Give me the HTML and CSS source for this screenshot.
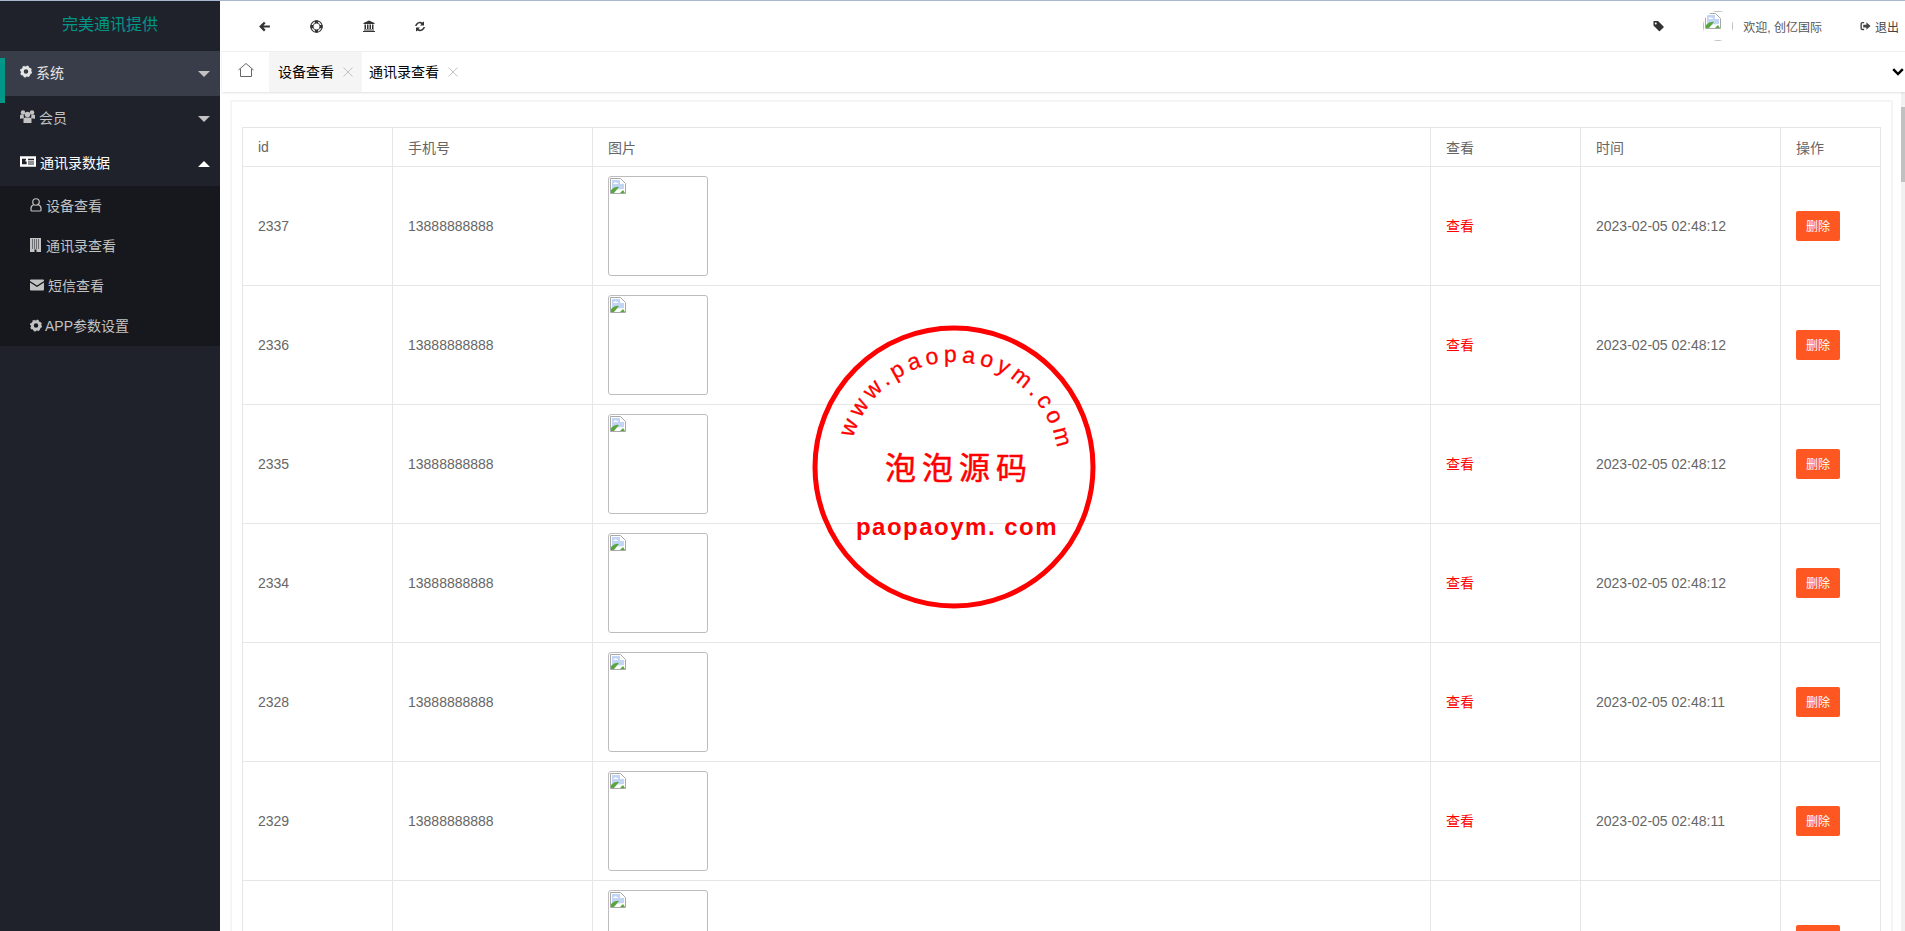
FILE: index.html
```html
<!DOCTYPE html>
<html lang="zh-CN">
<head>
  <meta charset="UTF-8" />
  <title>设备查看</title>
  <link rel="stylesheet" href="styles.css">
</head>
<body>

<!-- icons -->
<svg class="sprite" xmlns="http://www.w3.org/2000/svg">
  <symbol id="i-gear" viewBox="0 0 24 24">
    <circle cx="12" cy="12" r="7.5" fill="none" stroke="currentColor" stroke-width="6"/>
    <circle cx="12" cy="12" r="10.5" fill="none" stroke="currentColor" stroke-width="3" stroke-dasharray="4.2 4.05"/>
  </symbol>
  <symbol id="i-users" viewBox="0 0 30 26">
    <circle cx="6" cy="5" r="4.500" fill="currentColor"/>
    <circle cx="24" cy="5" r="4.500" fill="currentColor"/>
    <path d="M0 18v-7q0-2 3-2h4l1 8H2q-2 0-2 1zM30 18v-7q0-2-3-2h-4l-1 8h6q2 0 2 1z" fill="currentColor"/>
    <circle cx="15" cy="9" r="5.500" fill="currentColor"/>
    <path d="M7 26v-7q0-4 4-4h8q4 0 4 4v7z" fill="currentColor"/>
  </symbol>
  <symbol id="i-card" viewBox="0 0 24 16">
    <path fill-rule="evenodd" d="M0 0h24v16H0zM3 4v8h7V8H8V6h1V4zM12 4v2h9V4zM12 8v1.500h9V8zM12 11v1.500h9V11z" fill="currentColor"/>
  </symbol>
  <symbol id="i-user" viewBox="0 0 24 28">
    <circle cx="12" cy="8" r="6.500" fill="none" stroke="currentColor" stroke-width="2.400"/>
    <path d="M7 14q-5 1-5 7v3q0 2 2 2h16q2 0 2-2v-3q0-6-5-7" fill="none" stroke="currentColor" stroke-width="2.400"/>
  </symbol>
  <symbol id="i-building" viewBox="0 0 22 28">
    <path fill-rule="evenodd" d="M0 0h22v28H0zM4 3v2h2V3zM8 3v2h2V3zM12 3v2h2V3zM16 3v2h2V3zM4 7v2h2V7zM8 7v2h2V7zM12 7v2h2V7zM16 7v2h2V7zM4 11v2h2v-2zM8 11v2h2v-2zM12 11v2h2v-2zM16 11v2h2v-2zM4 15v2h2v-2zM8 15v2h2v-2zM12 15v2h2v-2zM16 15v2h2v-2zM4 19v2h2v-2zM8 19v2h2v-2zM12 19v2h2v-2zM16 19v2h2v-2zM9 23v5h4v-5z" fill="currentColor"/>
  </symbol>
  <symbol id="i-mail" viewBox="0 0 28 22">
    <path d="M0 2q0-2 2-2h24q2 0 2 2v1L14 12 0 3zM0 6l14 9 14-9v14q0 2-2 2H2q-2 0-2-2z" fill="currentColor"/>
  </symbol>
  <symbol id="i-back" viewBox="0 0 24 24">
    <path d="M2 12l9-9 3 3-4 4h12v4H10l4 4-3 3z" fill="currentColor"/>
  </symbol>
  <symbol id="i-ring" viewBox="0 0 24 24">
    <circle cx="12" cy="12" r="10.500" fill="none" stroke="currentColor" stroke-width="2"/>
    <circle cx="12" cy="12" r="6.500" fill="none" stroke="currentColor" stroke-width="1.500"/>
    <path d="M9 1h6v5h-6zM9 18h6v5H9zM1 9h5v6H1zM18 9h5v6h-5z" fill="currentColor"/>
  </symbol>
  <symbol id="i-bank" viewBox="0 0 24 24">
    <path d="M12 1l11 5v2H1V6zM3 9h3v9H3zM8 9h3v9H8zM13 9h3v9h-3zM18 9h3v9h-3zM2 19h20v2H2zM0 22h24v2H0z" fill="currentColor"/>
  </symbol>
  <symbol id="i-refresh" viewBox="0 0 24 24">
    <path d="M20 2v8h-8l3-3q-5-3-8 1-1 1-2 3H2q1-5 5-7 5-3 10 0zM4 22v-8h8l-3 3q5 3 8-1 1-1 2-3h3q-1 5-5 7-5 3-10 0z" fill="currentColor"/>
  </symbol>
  <symbol id="i-tag" viewBox="0 0 24 24">
    <path fill-rule="evenodd" d="M1 2q0-1 1-1h9l12 12q1 1 0 2l-8 8q-1 1-2 0L1 11zM6 4.500a2 2 0 1 0 .01 0z" fill="currentColor"/>
  </symbol>
  <symbol id="i-out" viewBox="0 0 24 24">
    <path d="M9 3H5Q1 3 1 7v10q0 4 4 4h4v-3H5q-1 0-1-1V7q0-1 1-1h4z" fill="currentColor"/>
    <path d="M14 4l9 8-9 8v-5H7V9h7z" fill="currentColor"/>
  </symbol>
  <symbol id="i-x" viewBox="0 0 10 10">
    <path d="M.5.500l9 9M9.500.500l-9 9" fill="none" stroke="currentColor"/>
  </symbol>
  <symbol id="i-broken" viewBox="0 0 16 16">
    <path d="M.5.500h10l5 5v10H.5z" fill="#fff" stroke="#a8a8a8"/>
    <path d="M2 2h8v4h4v5L2 12z" fill="#c3d5f5"/>
    <path d="M3 6q2-3 4-1h1v1H3z" fill="#fff"/>
    <path d="M1 15v-3q4-4 8-3l-5 6z" fill="#5aa63e"/>
    <path d="M10 15l3-3 2 3z" fill="#5aa63e"/>
  </symbol>
</svg>

<div class="app">

  <!-- Sidebar -->
  <aside class="sidebar">
    <div class="brand">完美通讯提供</div>
    <div class="nav-item active">
      <span class="nav-bar"></span>
      <svg class="ic ic-12"><use href="#i-gear"/></svg>
      <span class="nav-text">系统</span>
      <span class="caret"></span>
    </div>
    <div class="nav-item">
      <svg class="ic ic-15"><use href="#i-users"/></svg>
      <span class="nav-text">会员</span>
      <span class="caret"></span>
    </div>
    <div class="nav-item open">
      <svg class="ic ic-16"><use href="#i-card"/></svg>
      <span class="nav-text">通讯录数据</span>
      <span class="caret up"></span>
    </div>
    <div class="subnav">
      <a class="sub-item"><svg class="ic ic-user"><use href="#i-user"/></svg><span class="sub-text">设备查看</span></a>
      <a class="sub-item"><svg class="ic ic-11"><use href="#i-building"/></svg><span class="sub-text wide">通讯录查看</span></a>
      <a class="sub-item"><svg class="ic ic-14"><use href="#i-mail"/></svg><span class="sub-text">短信查看</span></a>
      <a class="sub-item"><svg class="ic ic-12"><use href="#i-gear"/></svg><span class="sub-text tight">APP参数设置</span></a>
    </div>
  </aside>

  <div class="main">

    <!-- Header -->
    <header class="topbar">
      <div class="tools">
        <span class="tool"><svg class="ic ic-13"><use href="#i-back"/></svg></span>
        <span class="tool"><svg class="ic ic-13"><use href="#i-ring"/></svg></span>
        <span class="tool"><svg class="ic ic-14"><use href="#i-bank"/></svg></span>
        <span class="tool"><svg class="ic ic-12"><use href="#i-refresh"/></svg></span>
      </div>
      <div class="user-box">
        <svg class="ic ic-11 tag"><use href="#i-tag"/></svg>
        <div class="avatar"><div class="avatar-img"><svg class="broken"><use href="#i-broken"/></svg></div></div>
        <span class="welcome">欢迎, 创亿国际</span>
        <a class="logout"><svg class="ic ic-11"><use href="#i-out"/></svg>退出</a>
      </div>
    </header>

    <!-- Tabs -->
    <nav class="tabs">
      <span class="tab-home">
        <svg class="home" viewBox="0 0 16 14"><path d="M.5 7L8 .5 15.500 7M2.500 6v7.500h11V6" fill="none" stroke="currentColor"/></svg>
      </span>
      <span class="tab current">设备查看<svg class="tab-x"><use href="#i-x"/></svg></span>
      <span class="tab second">通讯录查看<svg class="tab-x"><use href="#i-x"/></svg></span>
      <svg class="tabs-more" viewBox="0 0 12 8"><path d="M1.200 1.200L6 6l4.800-4.800" fill="none" stroke="currentColor" stroke-width="2.400"/></svg>
    </nav>

    <!-- Content -->
    <div class="content">
      <div class="page">
        <div class="card">
          <table class="data-table">
            <colgroup>
              <col class="c-id"><col class="c-phone"><col class="c-pic"><col class="c-view"><col class="c-time"><col class="c-op">
            </colgroup>
            <thead>
              <tr><th>id</th><th>手机号</th><th>图片</th><th>查看</th><th>时间</th><th>操作</th></tr>
            </thead>
            <tbody>
              <tr>
                <td>2337</td><td>13888888888</td>
                <td><div class="thumb"><svg class="broken"><use href="#i-broken"/></svg></div></td>
                <td><a class="view-link">查看</a></td><td>2023-02-05 02:48:12</td>
                <td><button class="btn-del">删除</button></td>
              </tr>
              <tr>
                <td>2336</td><td>13888888888</td>
                <td><div class="thumb"><svg class="broken"><use href="#i-broken"/></svg></div></td>
                <td><a class="view-link">查看</a></td><td>2023-02-05 02:48:12</td>
                <td><button class="btn-del">删除</button></td>
              </tr>
              <tr>
                <td>2335</td><td>13888888888</td>
                <td><div class="thumb"><svg class="broken"><use href="#i-broken"/></svg></div></td>
                <td><a class="view-link">查看</a></td><td>2023-02-05 02:48:12</td>
                <td><button class="btn-del">删除</button></td>
              </tr>
              <tr>
                <td>2334</td><td>13888888888</td>
                <td><div class="thumb"><svg class="broken"><use href="#i-broken"/></svg></div></td>
                <td><a class="view-link">查看</a></td><td>2023-02-05 02:48:12</td>
                <td><button class="btn-del">删除</button></td>
              </tr>
              <tr>
                <td>2328</td><td>13888888888</td>
                <td><div class="thumb"><svg class="broken"><use href="#i-broken"/></svg></div></td>
                <td><a class="view-link">查看</a></td><td>2023-02-05 02:48:11</td>
                <td><button class="btn-del">删除</button></td>
              </tr>
              <tr>
                <td>2329</td><td>13888888888</td>
                <td><div class="thumb"><svg class="broken"><use href="#i-broken"/></svg></div></td>
                <td><a class="view-link">查看</a></td><td>2023-02-05 02:48:11</td>
                <td><button class="btn-del">删除</button></td>
              </tr>
              <tr>
                <td></td><td></td>
                <td><div class="thumb"><svg class="broken"><use href="#i-broken"/></svg></div></td>
                <td></td><td></td>
                <td><button class="btn-del"></button></td>
              </tr>
            </tbody>
          </table>
        </div>
      </div>
      <div class="scrollbar"><div class="scroll-thumb"></div></div>
    </div>

  </div>
</div>

<!-- Watermark stamp -->
<svg class="stamp" viewBox="0 0 290 290">
  <defs>
    <path id="stamp-arc" d="M145 250A105 105 0 1 1 145.010 250"/>
  </defs>
  <circle cx="145" cy="145" r="139" fill="none" stroke="#f00" stroke-width="5"/>
  <g transform="rotate(4 145 145)">
    <text class="stamp-arc-text"><textPath href="#stamp-arc" startOffset="50%" text-anchor="middle">www.paopaoym.com</textPath></text>
  </g>
  <text class="stamp-cn" x="150" y="157" text-anchor="middle">泡泡源码</text>
  <text class="stamp-en" x="148" y="213" text-anchor="middle">paopaoym. com</text>
</svg>

</body>
</html>
```

FILE: styles.css
```css
* {
  box-sizing: border-box;
}

html, body {
  height: 100%;
}

body {
  margin: 0;
  overflow: hidden;
  position: relative;
  font-family: "Liberation Sans", "Noto Sans CJK SC", sans-serif;
  font-size: 14px;
  color: #666;
  background: #fff;
  border-top: 1px solid #a9b6d0;
}

.sprite {
  display: none;
}

.app {
  display: flex;
  height: 100%;
}

/* icons */
.ic { flex: none; display: block; }
.ic-11 { width: 11px; height: 14px; }
.ic-12 { width: 12px; height: 13px; }
.ic-13 { width: 13px; height: 13px; }
.ic-14 { width: 14px; height: 12px; }
.ic-15 { width: 15px; height: 13px; }
.ic-16 { width: 16px; height: 11px; }
.ic-user { width: 12px; height: 14px; }

.broken {
  display: block;
  width: 16px;
  height: 16px;
}

/* sidebar */
.sidebar {
  width: 220px;
  flex: none;
  background: #1f222a;
  color: #c2c2c2;
}

.brand {
  height: 50px;
  line-height: 48px;
  text-align: center;
  font-size: 16px;
  color: #009688;
}

.nav-item {
  position: relative;
  display: flex;
  align-items: center;
  height: 45px;
  padding: 0 10px 4px 20px;
}

.nav-item.active {
  background: #393d49;
  color: #e6e6e6;
}

.nav-item.open {
  color: #fff;
}

.nav-bar {
  position: absolute;
  left: 0;
  top: 7px;
  width: 5px;
  height: 45px;
  background: #009688;
}

.nav-text {
  margin-left: 4px;
}

.caret {
  margin-left: auto;
  width: 0;
  height: 0;
  border: 6px solid transparent;
  border-top-color: #c2c2c2;
  margin-top: 10px;
}

.caret.up {
  border-top-color: transparent;
  border-bottom-color: #fff;
  margin-top: -2px;
}

.subnav {
  background: #17181e;
}

.sub-item {
  display: flex;
  align-items: center;
  height: 40px;
  padding: 0 0 2px 30px;
  color: #c2c2c2;
}

.sub-text {
  margin-left: 4px;
}

.sub-text.wide {
  margin-left: 5px;
}

.sub-text.tight {
  margin-left: 3px;
}

/* header */
.main {
  flex: 1;
  min-width: 0;
  display: flex;
  flex-direction: column;
}

.topbar {
  display: flex;
  align-items: center;
  justify-content: space-between;
  height: 51px;
  flex: none;
  border-bottom: 1px solid #f1f1f1;
  padding-left: 38px;
  color: #333;
}

.tools {
  display: flex;
}

.tool {
  width: 52px;
  display: flex;
  justify-content: flex-start;
}

.user-box {
  display: flex;
  align-items: center;
  font-size: 12px;
  padding-right: 6px;
}

.tag {
  margin-right: 39px;
}

.avatar {
  width: 30px;
  height: 30px;
  border-radius: 50%;
  overflow: hidden;
}

.avatar-img {
  width: 30px;
  height: 30px;
  border: 1px solid #bbb;
  padding: 1px;
}

.welcome {
  margin-left: 10px;
  color: #555;
}

.logout {
  display: flex;
  align-items: center;
  margin-left: 38px;
  color: #444;
}

.logout .ic {
  margin-right: 4px;
}

/* tabs */
.tabs {
  display: flex;
  align-items: stretch;
  height: 40px;
  flex: none;
  margin-left: 2px;
  color: #000;
  box-shadow: 0 1px 2px rgba(0, 0, 0, 0.12);
  position: relative;
}

.tab-home {
  width: 47px;
  display: flex;
  align-items: center;
  justify-content: center;
  color: #666;
}

.home {
  width: 16px;
  height: 14px;
  margin-bottom: 5px;
}

.tab {
  display: flex;
  align-items: center;
  padding: 0 9px 2px;
}

.tab.current {
  background: #f5f5f5;
}

.tab.second {
  padding-left: 7px;
}

.tab-x {
  width: 10px;
  height: 10px;
  margin: 2px 0 0 9px;
  color: #c2c2c2;
}

.tabs-more {
  margin-left: auto;
  align-self: center;
  width: 12px;
  height: 8px;
  margin-right: 1px;
  color: #000;
}

/* content */
.content {
  flex: 1;
  min-height: 0;
  display: flex;
  overflow: hidden;
}

.page {
  flex: 1;
  min-width: 0;
  padding: 8px 8px 0 10px;
}

.card {
  height: 100%;
  border: 2px solid #f5f5f5;
  border-bottom: 0;
  padding: 25px 10px 0;
  overflow: hidden;
}

.data-table {
  width: 1639px;
  table-layout: fixed;
  border-collapse: collapse;
}

.c-id { width: 150px; }
.c-phone { width: 200px; }
.c-pic { width: 838px; }
.c-view { width: 150px; }
.c-time { width: 200px; }
.c-op { width: 100px; }

.data-table th,
.data-table td {
  border: 1px solid #e6e6e6;
  padding: 9px 15px;
  text-align: left;
  font-weight: normal;
  color: #666;
}

.data-table th {
  height: 39px;
  padding-top: 0;
  padding-bottom: 1px;
}

.thumb {
  width: 100px;
  height: 100px;
  border: 1px solid #bdbdbd;
  border-radius: 3px;
  padding: 1px;
}

.view-link {
  display: block;
  padding-bottom: 2px;
  color: #f00;
}

.btn-del {
  display: block;
  width: 44px;
  height: 30px;
  padding: 0 0 2px;
  border: none;
  border-radius: 2px;
  background: #ff5722;
  color: #fff;
  font: inherit;
  font-size: 12px;
}

.scrollbar {
  width: 4px;
  flex: none;
  background: #f1f1f1;
}

.scroll-thumb {
  margin-top: 15px;
  height: 75px;
  background: #c1c1c1;
}

/* watermark */
.stamp {
  position: absolute;
  left: 809px;
  top: 321px;
  width: 290px;
  height: 290px;
  pointer-events: none;
}

.stamp-arc-text {
  font-family: "Liberation Sans", sans-serif;
  font-size: 23px;
  letter-spacing: 4.600px;
  fill: #f00;
  stroke: #f00;
  stroke-width: 0.3px;
}

.stamp-cn {
  font-family: "Noto Sans CJK SC", sans-serif;
  font-size: 31px;
  letter-spacing: 6px;
  fill: #f00;
  stroke: #f00;
  stroke-width: 0.5px;
}

.stamp-en {
  font-family: "Liberation Sans", sans-serif;
  font-size: 24px;
  font-weight: bold;
  letter-spacing: 1.500px;
  fill: #f00;
}
```
